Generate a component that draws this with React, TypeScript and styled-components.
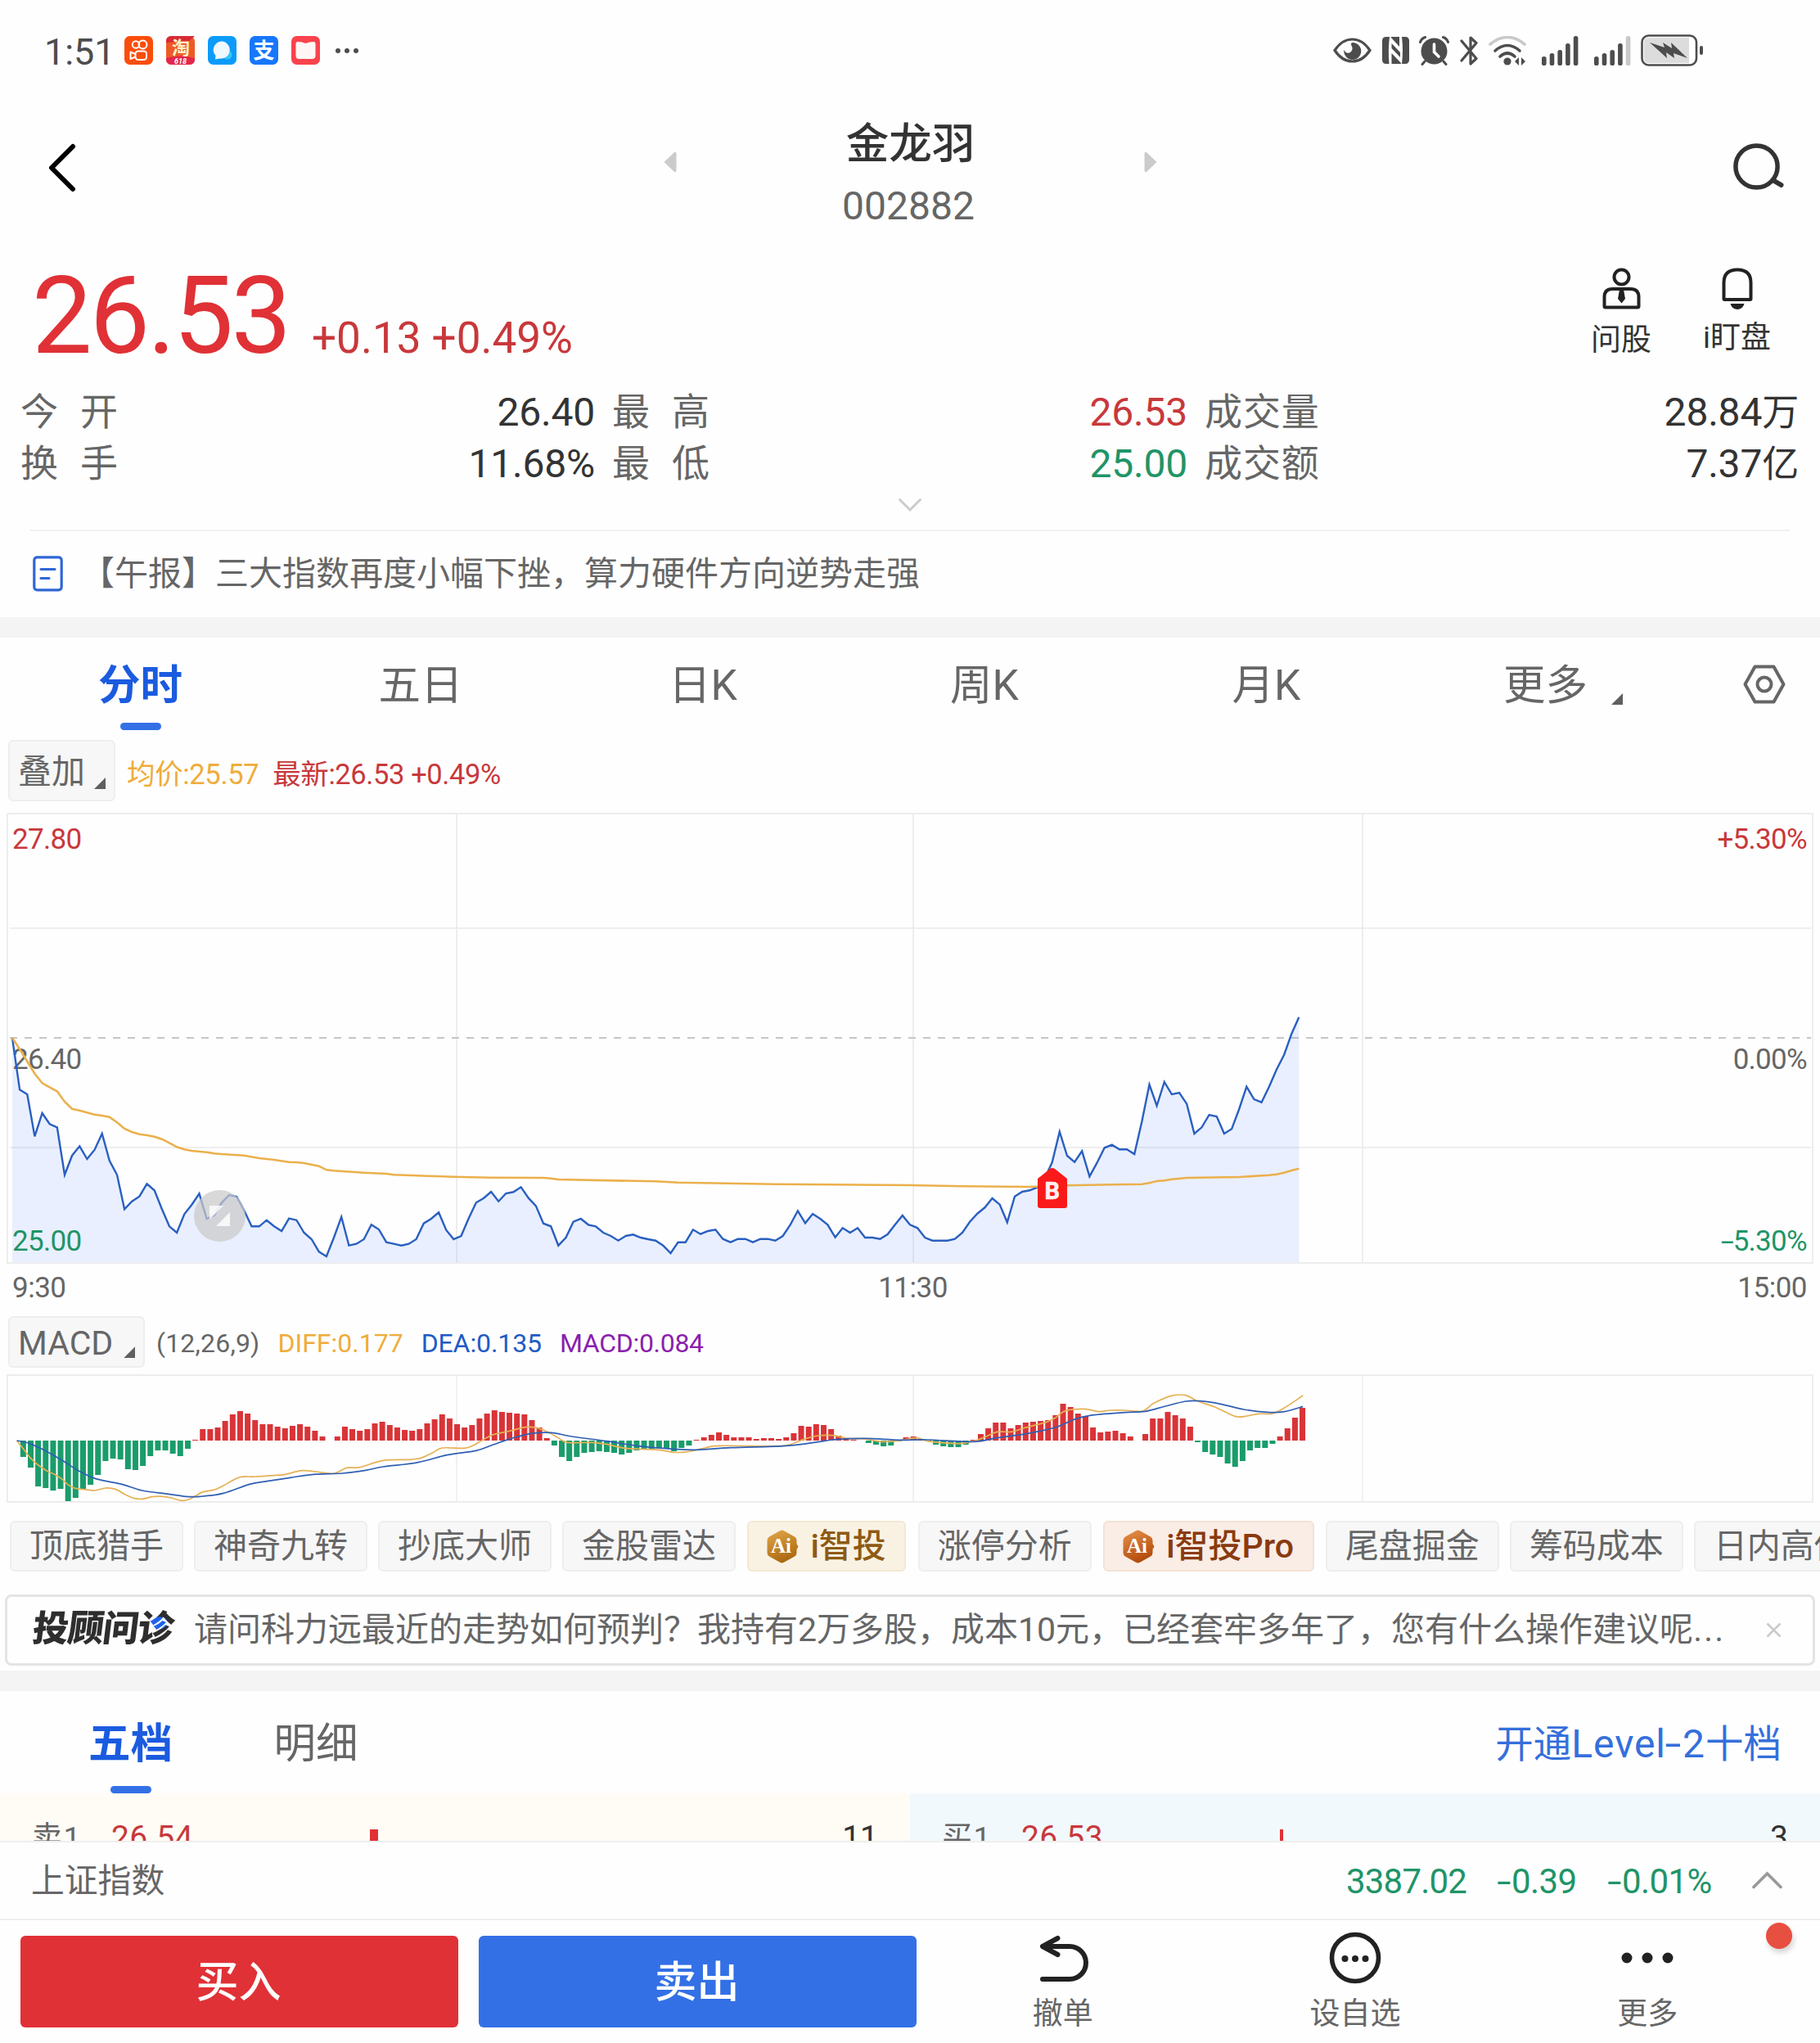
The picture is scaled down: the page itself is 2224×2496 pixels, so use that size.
import React from 'react';
import styled, { createGlobalStyle } from 'styled-components';

const FONT = 'Roboto, "Noto Sans CJK SC", sans-serif';

const C = {
  red: '#c8383b',
  redStrong: '#e03136',
  green: '#1f9468',
  blue: '#1b5bdf',
  blueFill: '#3370e6',
  text: '#333333',
  sub: '#666666',
  amber: '#efac3b',
  purple: '#8a1fae',
};

const Global = createGlobalStyle`
  html, body { margin: 0; padding: 0; background: #fefefe; }
  * { box-sizing: border-box; }
  svg { display: block; flex: none; }
`;

const Screen = styled.div`
  width: 2224px;
  height: 2496px;
  overflow: hidden;
  display: flex;
  flex-direction: column;
  background: #fefefe;
  font-family: ${FONT};
  color: ${C.text};
  white-space: nowrap;
`;

/* ---------- status bar ---------- */

const StatusBar = styled.div`
  height: 110px;
  flex: none;
  display: flex;
  align-items: flex-start;
  padding: 42px 143px 0 54px;
`;

const Clock = styled.div`
  width: 98px;
  font-size: 45px;
  line-height: 43px;
  letter-spacing: -0.1px;
  color: #4d4d4d;
`;

const AppIcons = styled.div`
  display: flex;
  gap: 16px;
  padding-top: 2px;
`;

const MoreDots = styled.div`
  display: flex;
  gap: 5px;
  padding: 17px 0 0 19px;
`;

const Dot = styled.span<{ $size: number; $color: string }>`
  width: ${p => p.$size}px;
  height: ${p => p.$size}px;
  border-radius: 50%;
  background: ${p => p.$color};
`;

const StatusRight = styled.div`
  margin-left: auto;
  display: flex;
  align-items: center;
  height: 39px;
`;

const Slot = styled.div<{ $gap: number }>`
  margin-left: ${p => p.$gap}px;
`;

/* ---------- header ---------- */

const Header = styled.header`
  height: 190px;
  flex: none;
  display: flex;
  align-items: center;
  justify-content: space-between;
  padding: 0 44px 0 58px;
`;

const TitleNav = styled.div`
  display: flex;
  align-items: center;
  width: 604px;
  justify-content: space-between;
  margin-left: 15px;
`;

const TitleBlock = styled.div`
  display: flex;
  flex-direction: column;
  align-items: center;
  padding: 15px 5px 0 0;
`;

const StockName = styled.div`
  font-size: 52.5px;
  font-weight: 500;
  line-height: 78px;
  padding-left: 5px;
`;

const StockCode = styled.div`
  font-size: 48px;
  line-height: 74px;
  color: ${C.sub};
`;

const ArrowSlot = styled.div`
  padding-bottom: 14px;
`;

/* ---------- price ---------- */

const PriceRow = styled.section`
  height: 172px;
  flex: none;
  display: flex;
  padding: 6px 60px 0 39px;
`;

const PriceGroup = styled.div`
  display: flex;
  align-items: baseline;
  height: 160px;
`;

const Price = styled.div`
  font-size: 131px;
  line-height: 160px;
  letter-spacing: -3px;
  color: ${C.redStrong};
`;

const Change = styled.div`
  font-size: 53px;
  color: ${C.red};
  margin-left: 28px;
`;

const Shortcuts = styled.div`
  margin-left: auto;
  display: flex;
  gap: 63px;
  padding-top: 21px;
`;

const Shortcut = styled.div<{ $lift?: number }>`
  display: flex;
  flex-direction: column;
  align-items: center;
  font-size: 37px;
  line-height: 44px;
  & > span { margin-top: ${p => 16 - (p.$lift ?? 0)}px; }
`;

const Stats = styled.section`
  height: 127px;
  flex: none;
  display: grid;
  grid-template-columns: 702px 703px 1fr;
  grid-template-rows: 63px 64px;
  column-gap: 21px;
  padding: 0 26px 0 25px;
`;

const Stat = styled.div`
  display: flex;
  justify-content: space-between;
  line-height: 63px;
`;

const StatLabel = styled.span<{ $wide?: boolean }>`
  font-size: 46px;
  color: ${C.sub};
  letter-spacing: ${p => (p.$wide ? 27 : 0.9)}px;
`;

const StatValue = styled.span<{ $color?: string }>`
  font-size: 48px;
  letter-spacing: -0.2px;
  color: ${p => p.$color ?? C.text};
  & > small { font-size: 45px; }
`;

const ExpandRow = styled.div`
  height: 48px;
  flex: none;
  display: flex;
  justify-content: center;
  padding-top: 9px;
`;

const News = styled.div`
  height: 107px;
  flex: none;
  margin: 0 37px;
  border-top: 2px solid #f1f1f1;
  display: flex;
  align-items: flex-start;
  padding: 30px 0 0 3px;
  font-size: 41px;
  line-height: 44px;
  color: ${C.sub};
  gap: 22px;
`;

const Band = styled.div`
  height: 25px;
  flex: none;
  background: #f4f4f4;
`;

/* ---------- tabs ---------- */

const Tabs = styled.nav`
  height: 113px;
  flex: none;
  display: flex;
`;

const Tab = styled.div<{ $active?: boolean; $w: number; $lh: number; $h: number }>`
  width: ${p => p.$w}px;
  display: flex;
  flex-direction: column;
  align-items: center;
  color: ${p => (p.$active ? C.blue : C.sub)};
  & > span {
    font-size: 51.5px;
    font-weight: ${p => (p.$active ? 700 : 400)};
    line-height: ${p => p.$lh}px;
    height: ${p => p.$h}px;
    display: flex;
  }
`;

const Underline = styled.i`
  width: 50px;
  height: 9px;
  border-radius: 5px;
  background: ${C.blueFill};
`;

const Corner = styled.i<{ $ml: number; $mt: number }>`
  width: 14px;
  height: 14px;
  margin: ${p => p.$mt}px 0 0 ${p => p.$ml}px;
  background: #5f5f5f;
  clip-path: polygon(100% 0, 100% 100%, 0 100%);
`;

const SettingsSlot = styled.div`
  padding: 33px 0 0 52px;
`;

/* ---------- indicator rows ---------- */

const IndicatorRow = styled.div<{ $h: number; $pt: number }>`
  height: ${p => p.$h}px;
  flex: none;
  display: flex;
  align-items: flex-start;
  padding: ${p => p.$pt}px 0 0 10px;
`;

const Picker = styled.div<{ $w: number; $h: number }>`
  width: ${p => p.$w}px;
  height: ${p => p.$h}px;
  border: 2px solid #eeeeee;
  border-radius: 6px;
  background: #f7f7f7;
  padding-left: 10px;
  display: flex;
  font-size: 41px;
  line-height: ${p => p.$h}px;
  color: ${C.sub};
`;

const Reading = styled.span<{ $color: string; $size: number; $ml: number; $lh: number; $ls?: number }>`
  font-size: ${p => p.$size}px;
  line-height: ${p => p.$lh}px;
  margin-left: ${p => p.$ml}px;
  letter-spacing: ${p => p.$ls ?? 0}px;
  color: ${p => p.$color};
`;

const AxisRow = styled.div`
  height: 60px;
  flex: none;
  display: grid;
  grid-template-columns: 1fr auto 1fr;
  padding: 0 16px 0 15px;
  font-size: 35px;
  letter-spacing: -0.5px;
  line-height: 59px;
  color: ${C.sub};
  & > span:nth-child(2) { padding-left: 8px; }
  & > span:last-child { text-align: right; }
`;

/* ---------- chips ---------- */

const Chips = styled.div`
  height: 112px;
  flex: none;
  display: flex;
  align-items: flex-start;
  gap: 13px;
  padding: 22px 0 0 12px;
  overflow: hidden;
`;

const Chip = styled.div<{ $tone?: 'gold' | 'copper' }>`
  flex: none;
  height: 62px;
  display: flex;
  align-items: center;
  gap: 14.5px;
  margin: 0 ${p => (p.$tone ? 1.3 : 0)}px;
  padding: 0 ${p => (p.$tone ? 22.6 : 22)}px;
  border: 2px solid ${p => (p.$tone === 'gold' ? '#f3e8d2' : p.$tone === 'copper' ? '#f3e2d6' : '#eeeeee')};
  border-radius: 6px;
  background: ${p => (p.$tone === 'gold' ? '#f9f2e3' : p.$tone === 'copper' ? '#f9ede5' : '#f7f7f7')};
  color: ${p => (p.$tone === 'gold' ? '#8f5a14' : p.$tone === 'copper' ? '#8a3a10' : C.sub)};
  font-size: 41px;
  font-weight: ${p => (p.$tone ? 500 : 400)};
  line-height: 61px;
  & > svg { margin-left: -3px; }
`;

/* ---------- advisor banner ---------- */

const Advisor = styled.div`
  height: 87px;
  flex: none;
  margin: 0 6px 6px;
  border: 3px solid #e4e4e4;
  border-radius: 8px;
  display: flex;
  align-items: center;
  padding: 0 38px 0 31px;
  color: ${C.sub};
`;

const AdvisorLogo = styled.div`
  width: 197px;
  line-height: 64px;
  padding-bottom: 3px;
  font-size: 44px;
  font-weight: 900;
  letter-spacing: -1.2px;
  color: transparent;
  background: radial-gradient(ellipse 11px 8px at 153px 25px, #1f62ea 92%, #2e2e2e 100%);
  -webkit-background-clip: text;
  background-clip: text;
  transform: skewX(-7deg);
`;

const AdvisorText = styled.div`
  font-size: 41px;
  line-height: 64px;
  padding-bottom: 1px;
  flex: 1;
`;

const Ellipsis = styled.span`
  letter-spacing: 2.2px;
`;

/* ---------- order book ---------- */

const BookTabs = styled.div`
  height: 125px;
  flex: none;
  display: flex;
  padding: 0 47px 0 48px;
`;

const LevelLink = styled.div`
  margin-left: auto;
  font-size: 46.5px;
  line-height: 129px;
  color: #356fdb;
  & > span { font-size: 48px; letter-spacing: 0.9px; }
`;

const Minus = styled.i`
  display: inline-block;
  font-style: normal;
  transform: scaleX(1.5);
  margin: 0 4px 0 2px;
`;

const Book = styled.div`
  height: 58px;
  flex: none;
  display: grid;
  grid-template-columns: 1fr 1fr;
  overflow: hidden;
`;

const BookSide = styled.div<{ $bg: string }>`
  height: 58px;
  overflow: hidden;
  display: flex;
  align-items: flex-start;
  background: ${p => p.$bg};
  padding: 0 39px;
  line-height: 109px;
  font-size: 39px;
`;

const BookLabel = styled.span`
  width: 97px;
  font-size: 37px;
  letter-spacing: 1.5px;
  color: ${C.sub};
`;

const BookPrice = styled.span`
  width: 316px;
  color: ${C.red};
  letter-spacing: 0.4px;
`;

const VolumeBar = styled.i<{ $w: number }>`
  width: ${p => p.$w}px;
  height: 30px;
  margin-top: 44px;
  background: ${C.redStrong};
`;

const Volume = styled.span`
  margin-left: auto;
`;

/* ---------- index + actions ---------- */

const IndexRow = styled.div`
  height: 97px;
  flex: none;
  border-top: 2px solid #eeeeee;
  border-bottom: 2px solid #eeeeee;
  display: flex;
  align-items: center;
  padding: 0 46px 0 38px;
  line-height: 93px;
`;

const IndexName = styled.span`
  font-size: 40.8px;
  color: ${C.sub};
  margin-right: auto;
  padding-top: 1px;
`;

const IndexValue = styled.span<{ $w: number; $ls: number }>`
  font-size: 42px;
  color: ${C.green};
  width: ${p => p.$w}px;
  padding-top: 1px;
  letter-spacing: ${p => p.$ls}px;
`;

const BottomBar = styled.footer`
  height: 150px;
  flex: none;
  display: flex;
  padding: 19px 32px 0 25px;
  position: relative;
`;

const TradeButton = styled.button<{ $bg: string }>`
  width: 535px;
  height: 112px;
  margin-right: 25px;
  padding: 0 2px 8px 0;
  border: 0;
  border-radius: 6px;
  background: ${p => p.$bg};
  color: #fff;
  font-family: ${FONT};
  font-size: 52px;
  font-weight: 500;
`;

const Actions = styled.div`
  flex: 1;
  margin-left: -25px;
  display: grid;
  grid-template-columns: repeat(3, 1fr);
`;

const Action = styled.div`
  display: flex;
  flex-direction: column;
  align-items: center;
  font-size: 37px;
  line-height: 44px;
  color: ${C.sub};
  & > svg { margin: -6px 0 14px; }
`;

const Notice = styled.i`
  position: absolute;
  right: 34px;
  top: 3px;
  width: 32px;
  height: 32px;
  border-radius: 50%;
  background: #e74f40;
  box-shadow: 2px 5px 6px rgba(0, 0, 0, 0.16);
`;

/* ---------- data ---------- */

const STEP = 9.1415;

// Minute prices, in thirds of a pixel below y = 207 of the plot.
const PRICES = [
  204, 394, 411, 565, 480, 520, 532, 706, 635, 601, 648, 614, 555, 654, 706, 832, 803, 785, 739, 763, 831, 895, 918, 850,
  815, 775, 867, 854, 808, 780, 786, 837, 895, 895, 872, 895, 912, 866, 872, 918, 942, 988, 1005, 935, 860, 965, 959, 942,
  889, 906, 953, 959, 965, 959, 942, 884, 867, 844, 908, 942, 930, 866, 808, 792, 768, 803, 774, 769, 751, 791, 820, 884,
  895, 965, 936, 878, 867, 889, 895, 918, 930, 947, 930, 925, 936, 942, 947, 965, 993, 953, 953, 907, 923, 912, 907, 941,
  953, 941, 941, 953, 941, 941, 947, 930, 889, 838, 883, 849, 867, 889, 935, 901, 918, 901, 936, 936, 941, 924, 889, 855,
  889, 901, 936, 947, 947, 947, 941, 918, 878, 848, 826, 792, 815, 880, 785, 768, 763, 752, 720, 660, 548, 636, 659, 619,
  712, 662, 607, 596, 613, 613, 630, 510, 375, 453, 366, 411, 405, 446, 555, 532, 486, 492, 555, 538, 465, 383, 429, 440,
  383, 320, 266, 190, 128,
];

// [minute, level] pairs of the running average.
const AVERAGE: [number, number][] = [
  [0, 204], [1, 245], [2, 290], [3, 335], [4, 370], [5, 385], [6, 400], [7, 438], [8, 464], [9, 470], [10, 478], [11, 485],
  [12, 489], [13, 494], [14, 514], [15, 537], [16, 549], [17, 557], [18, 561], [19, 566], [20, 575], [21, 589], [22, 604],
  [23, 613], [24, 618], [26, 623], [27, 628], [28, 630], [31, 635], [33, 645], [35, 651], [37, 659], [38, 660], [39, 663],
  [41, 674], [42, 688], [43, 691], [47, 698], [50, 702], [51, 706], [59, 713], [64, 716], [71, 717], [72, 719], [73, 723],
  [86, 730], [89, 734], [102, 740], [120, 744], [127, 748], [136, 750], [141, 745], [147, 742], [151, 740], [152, 736],
  [153, 729], [154, 727], [155, 722], [157, 717], [164, 714], [168, 707], [169, 704], [170, 698], [171, 690], [172, 683],
];

// Histogram ends, same third-pixel scale; 480 is the zero line.
const ZERO = 480;
const HISTOGRAM = [
  540, 579, 648, 654, 663, 657, 702, 690, 660, 642, 606, 555, 546, 549, 585, 588, 573, 537, 516, 516, 528, 537, 510, 477,
  438, 438, 432, 408, 384, 372, 381, 405, 420, 420, 429, 435, 426, 420, 429, 444, 465, 480, 465, 429, 438, 444, 438, 417,
  411, 423, 432, 441, 444, 438, 417, 402, 384, 399, 420, 432, 423, 399, 381, 369, 375, 378, 381, 384, 405, 432, 471, 498,
  540, 555, 540, 525, 522, 519, 522, 525, 531, 525, 516, 513, 510, 507, 510, 519, 507, 498, 477, 468, 459, 450, 459, 468,
  468, 468, 474, 471, 471, 474, 468, 453, 426, 429, 420, 423, 438, 462, 471, 477, 480, 489, 495, 501, 498, 483, 468, 465,
  474, 483, 495, 501, 504, 504, 495, 477, 456, 435, 414, 414, 435, 423, 414, 411, 408, 405, 387, 345, 357, 381, 390, 432,
  450, 447, 444, 453, 465, 480, 456, 399, 399, 375, 387, 399, 429, 486, 522, 531, 540, 564, 576, 555, 516, 507, 507, 492,
  465, 435, 396, 360,
];

const DIFF: [number, number][] = [
  [29, 480], [40, 510], [53, 545], [66, 570], [80, 590], [95, 605], [106, 620], [118, 643], [130, 655], [145, 659],
  [163, 663], [182, 654], [200, 659], [215, 677], [232, 692], [245, 694], [262, 686], [280, 685], [295, 690], [312, 700],
  [325, 696], [336, 684], [350, 668], [370, 660], [385, 645], [400, 627], [415, 613], [440, 612], [475, 607], [490, 605],
  [520, 590], [545, 594], [575, 601], [597, 580], [620, 578], [660, 553], [705, 550], [725, 544], [745, 525], [762, 507],
  [800, 508], [815, 498], [830, 480], [850, 458], [880, 444], [905, 431], [925, 433], [945, 450], [962, 470], [978, 487],
  [1020, 487], [1045, 493], [1080, 509], [1135, 514], [1160, 523], [1185, 521], [1215, 507], [1240, 499], [1340, 500],
  [1365, 492], [1385, 475], [1410, 462], [1435, 461], [1460, 472], [1490, 474], [1520, 484], [1550, 480], [1578, 470],
  [1598, 482], [1623, 488], [1653, 491], [1678, 482], [1698, 466], [1718, 448], [1743, 448], [1763, 435], [1803, 412],
  [1818, 397], [1836, 371], [1868, 364], [1893, 374], [1913, 369], [1938, 369], [1968, 372], [1988, 343], [2018, 316],
  [2043, 314], [2063, 335], [2093, 357], [2128, 391], [2148, 390], [2168, 382], [2193, 381], [2213, 360], [2245, 315],
];

const DEA: [number, number][] = [
  [29, 480], [50, 490], [75, 514], [105, 550], [135, 590], [165, 620], [210, 640], [245, 663], [290, 676], [320, 685],
  [345, 685], [385, 673], [430, 640], [460, 629], [500, 616], [540, 604], [590, 600], [630, 589], [660, 576], [720, 560],
  [770, 533], [820, 517], [850, 495], [880, 473], [915, 454], [950, 451], [985, 465], [1045, 482], [1100, 500],
  [1160, 511], [1200, 514], [1260, 506], [1350, 500], [1400, 488], [1440, 476], [1490, 472], [1550, 478], [1598, 477],
  [1678, 484], [1718, 470], [1768, 455], [1818, 432], [1848, 405], [1878, 388], [1938, 377], [1973, 373], [2008, 354],
  [2043, 336], [2068, 335], [2103, 346], [2143, 366], [2183, 376], [2213, 374], [2245, 355],
];

const minuteX = (i: number) => 15 + i * STEP;
const levelY = (v: number) => 207 + v / 3;
const points = (list: [number, number][]) => list.map(([x, y]) => `${x.toFixed(1)},${y.toFixed(1)}`).join(' ');

const smooth = (raw: [number, number][]) => {
  const p = raw.map(([x, y]) => [x / 1.41, y / 3 - 79] as const);
  let d = `M${p[0][0]} ${p[0][1]}`;
  for (let i = 0; i < p.length - 1; i++) {
    const a = p[Math.max(i - 1, 0)];
    const b = p[i];
    const c = p[i + 1];
    const e = p[Math.min(i + 2, p.length - 1)];
    d += `C${b[0] + (c[0] - a[0]) / 6} ${b[1] + (c[1] - a[1]) / 6} ${c[0] - (e[0] - b[0]) / 6} ${c[1] - (e[1] - b[1]) / 6} ${c[0]} ${c[1]}`;
  }
  return d;
};

const PRICE_LINE = points(PRICES.map((v, i) => [minuteX(i), levelY(v)]));
const AVERAGE_LINE = points(AVERAGE.map(([i, v]) => [minuteX(i), levelY(v)]));

/* ---------- charts ---------- */

const PriceChart = () => (
  <svg width="2224" height="551" viewBox="0 0 2224 551" fontFamily={FONT} fontSize="35" letterSpacing="-0.7">
    <g fill="none" stroke="#ededed" strokeWidth="2">
      <rect x="9" y="1" width="2206" height="549" />
      <path d="M12 141H2213M12 409H2213M558 1V550M1116 1V550M1665 1V550" strokeWidth="1.5" stroke="#e9e9e9" />
    </g>
    <path d="M12 275H2213" stroke="#c6c6c6" strokeWidth="2" strokeDasharray="9 9" />
    <polygon points={`15,549 ${PRICE_LINE} ${minuteX(172)},549`} fill="#3370ff" fillOpacity="0.1" />
    <g fill="#666">
      <text x="15" y="313">26.40</text>
      <text x="2208" y="313" textAnchor="end">0.00%</text>
    </g>
    <polyline points={PRICE_LINE} fill="none" stroke="#2a5fc0" strokeWidth="2.4" />
    <polyline points={AVERAGE_LINE} fill="none" stroke="#ebb04b" strokeWidth="2.6" />
    <g fill={C.red}>
      <text x="15" y="44">27.80</text>
      <text x="2208" y="44" textAnchor="end">+5.30%</text>
    </g>
    <g fill={C.green}>
      <text x="15" y="535">25.00</text>
      <text x="2208" y="535" textAnchor="end">
        <tspan textLength="15" lengthAdjust="spacingAndGlyphs">-</tspan>5.30%
      </text>
    </g>
    <circle cx="268.500" cy="492.500" r="31.5" fill="#c9c9c9" fillOpacity="0.72" />
    <path d="M256 480H273L256 497ZM281 488V505H264Z" fill="#fff" fillOpacity="0.8" />
    <path d="M1268 447L1283 435Q1286 433 1289 435L1304 447V480Q1304 483 1301 483H1271Q1268 483 1268 480Z" fill="#fa1a1a" />
    <text x="1285.500" y="471.500" fontSize="29" fontWeight="700" fill="#fff0f0" stroke="#fff0f0" strokeWidth="0.6" textAnchor="middle">B</text>
  </svg>
);

const MacdChart = () => (
  <svg width="2224" height="157" viewBox="0 0 2224 157">
    <g fill="none" stroke="#ededed" strokeWidth="2">
      <rect x="9" y="1" width="2206" height="155" />
      <path d="M558 1V156M1116 1V156M1665 1V156" strokeWidth="1.5" />
    </g>
    {HISTOGRAM.map((v, i) => (
      <rect
        key={i}
        x={19.2 + STEP * (i + 1) - 3.5}
        y={Math.min(v, ZERO) / 3 - 79}
        width="7"
        height={Math.abs(v - ZERO) / 3}
        fill={v > ZERO ? '#1a9c6b' : '#d93438'}
      />
    ))}
    <path d={smooth(DIFF)} fill="none" stroke="#e6b054" strokeWidth="1.7" />
    <path d={smooth(DEA)} fill="none" stroke="#2f5fb3" strokeWidth="1.7" />
  </svg>
);

/* ---------- icons ---------- */

const AppTile = ({ fill, children }: { fill: string; children: React.ReactNode }) => (
  <svg width="35" height="35" viewBox="0 0 35 35">
    <rect width="35" height="35" rx="6.5" fill={fill} />
    {children}
  </svg>
);

const SignalBars = ({ weakLast }: { weakLast?: boolean }) => (
  <svg width="45" height="36" viewBox="0 0 45 36">
    {[11, 15, 19, 27, 36].map((h, i) => (
      <rect key={i} x={i * 9.7} y={36 - h} width="5.6" height={h} rx="2.6" fill={weakLast && i === 4 ? '#c9c9c9' : '#4d4d4d'} />
    ))}
  </svg>
);

const AiBadge = ({ id, from, to }: { id: string; from: string; to: string }) => (
  <svg width="41" height="41" viewBox="0 0 41 41">
    <defs>
      <linearGradient id={id} x1="0" y1="0" x2="0.4" y2="1">
        <stop offset="0" stopColor={from} />
        <stop offset="1" stopColor={to} />
      </linearGradient>
    </defs>
    <path d="M18 1.2Q20.500 0 23 1.200L36 8.500Q38.500 10 38.500 13V17L40.500 20.500L38.500 24V28Q38.500 31 36 32.500L23 39.800Q20.500 41 18 39.800L5 32.500Q2.500 31 2.500 28V13Q2.500 10 5 8.500Z" fill={`url(#${id})`} />
    <text x="19.500" y="28" fontFamily='"Liberation Serif", serif' fontWeight="700" fontSize="25" fill="#fff" textAnchor="middle">Ai</text>
  </svg>
);

const Status = () => (
  <StatusBar>
    <Clock>1:51</Clock>
    <AppIcons>
      <AppTile fill="#fa4d0b">
        <g fill="none" stroke="#fff" strokeWidth="2">
          <circle cx="14" cy="10.500" r="4.200" />
          <circle cx="22.500" cy="10.500" r="5" />
          <rect x="13.500" y="18.500" width="13.500" height="10.500" rx="3.200" />
          <path d="M13.500 22L7.500 19.500V28L13.500 25.500" strokeLinejoin="round" />
        </g>
      </AppTile>
      <AppTile fill="#ee5a26">
        <path d="M0 27Q17 22 35 27V28.500Q35 35 28.500 35H6.500Q0 35 0 28.500Z" fill="#e3264a" />
        <path d="M0 8V6.500Q0 0 6.500 0H35L28 6Z" fill="#d92a35" />
        <text x="18" y="22" fontFamily={FONT} fontWeight="700" fontSize="22" fill="#fff3c9" textAnchor="middle">淘</text>
        <text x="17.500" y="33.500" fontFamily={FONT} fontWeight="700" fontStyle="italic" fontSize="9" fill="#fff" textAnchor="middle">618</text>
      </AppTile>
      <AppTile fill="#0c9bfb">
        <circle cx="24" cy="23" r="5.500" fill="#35c6f5" />
        <path d="M17 6.500A10.500 10.500 0 1 1 15 27.400L9 28.500L9.500 24A10.500 10.500 0 0 1 17 6.500Z" fill="#eef8ff" />
      </AppTile>
      <AppTile fill="#1677fb">
        <text x="17.500" y="27" fontFamily={FONT} fontWeight="700" fontSize="26" fill="#fff" textAnchor="middle">支</text>
      </AppTile>
      <AppTile fill="#fa434c">
        <path d="M8 7Q13 7 17.500 9Q22 7 27 7Q29.500 7 29.500 10V24Q29.500 28 25.500 28H9.500Q5.500 28 5.500 24V10Q5.500 7 8 7Z" fill="#fff5f4" />
      </AppTile>
    </AppIcons>
    <MoreDots>
      <Dot $size={6} $color="#4d4d4d" />
      <Dot $size={6} $color="#4d4d4d" />
      <Dot $size={6} $color="#4d4d4d" />
    </MoreDots>
    <StatusRight>
      <svg width="47" height="31" viewBox="0 0 47 31">
        <path d="M2 15.500Q11 2 23.500 2T45 15.500Q36 29 23.500 29T2 15.500Z" fill="none" stroke="#4d4d4d" strokeWidth="3.200" />
        <path d="M24 6A10.500 10.500 0 1 1 13.500 14.500A5 5 0 0 0 21 18Q25.500 15 22 8.500Q21.500 6.500 24 6Z" fill="#4d4d4d" />
      </svg>
      <Slot $gap={13}>
        <svg width="33" height="33" viewBox="0 0 33 33">
          <path d="M5 0H9Q7 16 8.500 33H5Q0 33 0 28V5Q0 0 5 0ZM11 0H21V12L11 1ZM24 0H28Q33 0 33 5V28Q33 33 28 33H24Q26 16 24 0ZM11.500 8L22 19V25L11.500 14ZM11.500 20L23 32V33H11.500Z" fill="#4d4d4d" />
        </svg>
      </Slot>
      <Slot $gap={12}>
        <svg width="37" height="36" viewBox="0 0 37 36">
          <circle cx="18.500" cy="18.500" r="16" fill="#4d4d4d" />
          <path d="M18.500 10V19.500L24 25" fill="none" stroke="#fff" strokeWidth="3.600" strokeLinecap="round" />
          <path d="M1.500 7.500Q3 3 7.500 1.500M35.500 7.500Q34 3 29.500 1.500M7 31L4 34.500M30 31L33 34.500" fill="none" stroke="#4d4d4d" strokeWidth="3" strokeLinecap="round" />
        </svg>
      </Slot>
      <Slot $gap={13}>
        <svg width="23" height="36" viewBox="0 0 23 36">
          <path d="M2 6L20 27.500L13 34V2L20 8.500L2 30" fill="none" stroke="#4d4d4d" strokeWidth="3.200" strokeLinejoin="round" strokeLinecap="round" />
        </svg>
      </Slot>
      <Slot $gap={12}>
        <svg width="46" height="36" viewBox="0 0 46 36">
          <path d="M2 10Q23 -7 44 10" fill="none" stroke="#c9c9c9" strokeWidth="3.600" strokeLinecap="round" />
          <path d="M8 18Q23 5 38 18M14 25Q23 17 32 25" fill="none" stroke="#4d4d4d" strokeWidth="3.600" strokeLinecap="round" />
          <circle cx="23" cy="31" r="4.600" fill="#4d4d4d" />
          <path d="M37 26V36L32 31ZM40 26V36L45 31Z" fill="#4d4d4d" />
        </svg>
      </Slot>
      <Slot $gap={19}><SignalBars /></Slot>
      <Slot $gap={19}><SignalBars weakLast /></Slot>
      <Slot $gap={12}>
        <svg width="76" height="39" viewBox="0 0 76 39">
          <rect x="1.500" y="1.500" width="66.500" height="36" rx="8" fill="#fff" stroke="#4d4d4d" strokeWidth="2.600" />
          <path d="M9 4H59V35H9Q4 35 4 30V9Q4 4 9 4Z" fill="#dcdcdc" />
          <path d="M11 10L29 16L27 10L38 17L37 10L57 29L40 23L41 29L31 22L32 29Z" fill="#4d4d4d" />
          <rect x="72" y="14" width="4" height="11" rx="2" fill="#4d4d4d" />
        </svg>
      </Slot>
    </StatusRight>
  </StatusBar>
);

const stats: { label: string; wide?: boolean; value: React.ReactNode; color?: string }[] = [
  { label: '今开', wide: true, value: '26.40' },
  { label: '最高', wide: true, value: '26.53', color: C.red },
  { label: '成交量', value: <>28.84<small>万</small></> },
  { label: '换手', wide: true, value: '11.68%' },
  { label: '最低', wide: true, value: '25.00', color: C.green },
  { label: '成交额', value: <>7.37<small>亿</small></> },
];

export default function App() {
  return (
    <Screen>
      <Global />
      <Status />

      <Header>
        <svg width="36" height="60" viewBox="0 0 36 60">
          <path d="M31 4L5 30L31 56" fill="none" stroke="#000" strokeWidth="6" strokeLinecap="round" strokeLinejoin="round" />
        </svg>
        <TitleNav>
          <ArrowSlot>
            <svg width="16" height="26" viewBox="0 0 16 26">
              <path d="M0.500 13L13 1Q15.500 0 15.500 3V23Q15.500 26 13 25Z" fill="#cbcbcb" />
            </svg>
          </ArrowSlot>
          <TitleBlock>
            <StockName>金龙羽</StockName>
            <StockCode>002882</StockCode>
          </TitleBlock>
          <ArrowSlot>
            <svg width="16" height="26" viewBox="0 0 16 26">
              <path d="M15.500 13L3 1Q0.500 0 0.500 3V23Q0.500 26 3 25Z" fill="#cbcbcb" />
            </svg>
          </ArrowSlot>
        </TitleNav>
        <svg width="64" height="60" viewBox="0 0 64 60">
          <circle cx="30.500" cy="28.500" r="25.600" fill="none" stroke="#333" strokeWidth="5.500" />
          <path d="M52 46L60.500 51" stroke="#333" strokeWidth="6" strokeLinecap="round" />
        </svg>
      </Header>

      <PriceRow>
        <PriceGroup>
          <Price>26.53</Price>
          <Change>+0.13 +0.49%</Change>
        </PriceGroup>
        <Shortcuts>
          <Shortcut>
            <svg width="47" height="51" viewBox="0 0 47 51">
              <g fill="none" stroke="#222" strokeWidth="4">
                <circle cx="23.500" cy="11.500" r="9" />
                <path d="M2.500 47V36Q2.500 26 12.500 26H34.500Q44.500 26 44.500 36V47Q44.500 48.500 43 48.500H4Q2.500 48.500 2.500 47Z" />
              </g>
              <path d="M21 27H26L28 38L23.500 43.500L19 38Z" fill="#222" />
            </svg>
            <span>问股</span>
          </Shortcut>
          <Shortcut $lift={3}>
            <svg width="40" height="51" viewBox="0 0 40 51">
              <path d="M3.500 38V18.500Q3.500 2.500 20 2.500T36.500 18.500V38Q36.500 39 35.500 39H4.500Q3.500 39 3.500 38Z" fill="none" stroke="#222" strokeWidth="4" />
              <path d="M11.500 44H28.500Q26.500 51 20 51T11.500 44Z" fill="#222" />
            </svg>
            <span>i盯盘</span>
          </Shortcut>
        </Shortcuts>
      </PriceRow>

      <Stats>
        {stats.map(s => (
          <Stat key={s.label}>
            <StatLabel $wide={s.wide}>{s.label}</StatLabel>
            <StatValue $color={s.color}>{s.value}</StatValue>
          </Stat>
        ))}
      </Stats>
      <ExpandRow>
        <svg width="30" height="18" viewBox="0 0 30 18">
          <path d="M2.500 2.500L15 15L27.500 2.500" fill="none" stroke="#cbcbcb" strokeWidth="3" strokeLinecap="round" />
        </svg>
      </ExpandRow>

      <News>
        <svg width="37" height="44" viewBox="0 0 37 44">
          <rect x="1.800" y="1.800" width="33.400" height="40" rx="3.500" fill="none" stroke="#2f66d6" strokeWidth="3.200" />
          <path d="M10 16.500H27M10 27.500H20" stroke="#2f66d6" strokeWidth="3.200" strokeLinecap="round" />
        </svg>
        <span>【午报】三大指数再度小幅下挫，算力硬件方向逆势走强</span>
      </News>
      <Band />

      <Tabs>
        <Tab $active $w={343} $lh={118} $h={104}><span>分时</span><Underline /></Tab>
        <Tab $w={342} $lh={118} $h={104}><span>五日</span></Tab>
        <Tab $w={348} $lh={118} $h={104}><span>日K</span></Tab>
        <Tab $w={340} $lh={118} $h={104}><span>周K</span></Tab>
        <Tab $w={349} $lh={118} $h={104}><span>月K</span></Tab>
        <Tab $w={376} $lh={118} $h={104}><span>更多<Corner $ml={29} $mt={68} /></span></Tab>
        <SettingsSlot style={{ marginLeft: -20 }}>
          <svg width="52" height="48" viewBox="0 0 52 48">
            <g fill="none" stroke="#666" strokeWidth="4">
              <path d="M14.500 2.500H37.500L49.500 24L37.500 45.500H14.500L2.500 24Z" strokeLinejoin="round" />
              <circle cx="26" cy="24" r="8.500" />
            </g>
          </svg>
        </SettingsSlot>
      </Tabs>

      <IndicatorRow $h={101} $pt={12}>
        <Picker $w={131} $h={75}>叠加<Corner $ml={11} $mt={44} /></Picker>
        <Reading $color={C.amber} $size={34.5} $ml={14} $lh={85} $ls={-0.35}>均价:25.57</Reading>
        <Reading $color={C.red} $size={34.5} $ml={17} $lh={85} $ls={-0.4}>最新:26.53 +0.49%</Reading>
      </IndicatorRow>
      <PriceChart />
      <AxisRow>
        <span>9:30</span>
        <span>11:30</span>
        <span>15:00</span>
      </AxisRow>

      <IndicatorRow $h={75} $pt={4}>
        <Picker $w={167} $h={63}>MACD<Corner $ml={13} $mt={35} /></Picker>
        <Reading $color={C.sub} $size={32} $ml={14} $lh={67} $ls={0.2}>(12,26,9)</Reading>
        <Reading $color={C.amber} $size={32} $ml={22} $lh={67}>DIFF:0.177</Reading>
        <Reading $color="#1f5bc4" $size={32} $ml={22} $lh={67} $ls={-0.1}>DEA:0.135</Reading>
        <Reading $color={C.purple} $size={32} $ml={22} $lh={67} $ls={-0.3}>MACD:0.084</Reading>
      </IndicatorRow>
      <MacdChart />

      <Chips>
        <Chip>顶底猎手</Chip>
        <Chip>神奇九转</Chip>
        <Chip>抄底大师</Chip>
        <Chip>金股雷达</Chip>
        <Chip $tone="gold"><AiBadge id="ai-gold" from="#e2a84a" to="#ad6a12" />i智投</Chip>
        <Chip>涨停分析</Chip>
        <Chip $tone="copper"><AiBadge id="ai-copper" from="#e8924a" to="#b34c0e" />i智投Pro</Chip>
        <Chip>尾盘掘金</Chip>
        <Chip>筹码成本</Chip>
        <Chip>日内高低</Chip>
      </Chips>

      <Advisor>
        <AdvisorLogo>投顾问诊</AdvisorLogo>
        <AdvisorText>请问科力远最近的走势如何预判？我持有2万多股，成本10元，已经套牢多年了，您有什么操作建议呢<Ellipsis>...</Ellipsis></AdvisorText>
        <svg width="19" height="19" viewBox="0 0 19 19">
          <path d="M1.500 1.500L17.500 17.500M17.500 1.500L1.500 17.500" stroke="#cbcbcb" strokeWidth="2.600" />
        </svg>
      </Advisor>
      <Band />

      <BookTabs>
        <Tab $active $w={223} $lh={129} $h={116}><span>五档</span><Underline /></Tab>
        <Tab $w={230} $lh={129} $h={116}><span>明细</span></Tab>
        <LevelLink>开通<span>Level<Minus>-</Minus>2</span>十档</LevelLink>
      </BookTabs>
      <Book>
        <BookSide $bg="#fefcf5">
          <BookLabel>卖1</BookLabel>
          <BookPrice>26.54</BookPrice>
          <VolumeBar $w={10} />
          <Volume>11</Volume>
        </BookSide>
        <BookSide $bg="#f2f9fd">
          <BookLabel>买1</BookLabel>
          <BookPrice>26.53</BookPrice>
          <VolumeBar $w={4} />
          <Volume>3</Volume>
        </BookSide>
      </Book>

      <IndexRow>
        <IndexName>上证指数</IndexName>
        <IndexValue $w={185} $ls={-0.8}>3387.02</IndexValue>
        <IndexValue $w={135} $ls={-0.6}><Minus>-</Minus>0.39</IndexValue>
        <IndexValue $w={176} $ls={-0.6}><Minus>-</Minus>0.01%</IndexValue>
        <svg width="37" height="24" viewBox="0 0 37 24">
          <path d="M2 19.500L18.500 3L35 19.500" fill="none" stroke="#999" strokeWidth="3.600" strokeLinecap="round" />
        </svg>
      </IndexRow>

      <BottomBar>
        <TradeButton $bg={C.redStrong}>买入</TradeButton>
        <TradeButton $bg={C.blueFill}>卖出</TradeButton>
        <Actions>
          <Action>
            <svg width="66" height="66" viewBox="0 0 66 66">
              <path d="M26.500 9L8 19L26.500 29M8.500 19H41A20 20 0 0 1 41 59H8" fill="none" stroke="#222" strokeWidth="6" strokeLinecap="round" strokeLinejoin="round" />
            </svg>
            撤单
          </Action>
          <Action>
            <svg width="66" height="66" viewBox="0 0 66 66">
              <circle cx="33" cy="33" r="28.500" fill="none" stroke="#222" strokeWidth="5.600" />
              <circle cx="20.500" cy="34" r="4" fill="#222" />
              <circle cx="33" cy="34" r="4" fill="#222" />
              <circle cx="45.500" cy="34" r="4" fill="#222" />
            </svg>
            设自选
          </Action>
          <Action>
            <svg width="66" height="66" viewBox="0 0 66 66">
              <circle cx="8" cy="33" r="6.500" fill="#222" />
              <circle cx="33" cy="33" r="6.500" fill="#222" />
              <circle cx="58" cy="33" r="6.500" fill="#222" />
            </svg>
            更多
          </Action>
        </Actions>
        <Notice />
      </BottomBar>
    </Screen>
  );
}
